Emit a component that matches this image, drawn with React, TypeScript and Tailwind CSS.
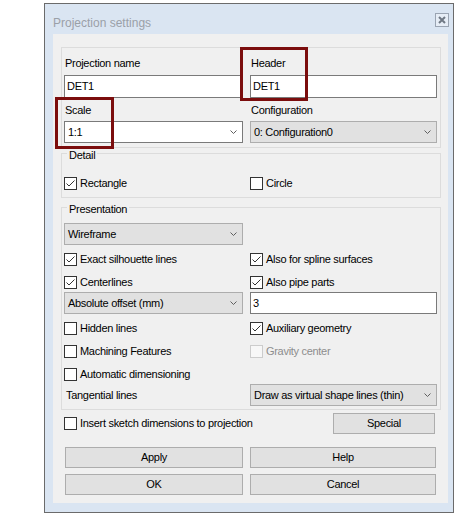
import React from 'react';

const Chevron = () => (
  <svg width="7" height="4" viewBox="0 0 7 4" className="shrink-0">
    <path d="M0.5 0.5 L3.5 3.5 L6.5 0.5" fill="none" stroke="#5f5f5f" strokeWidth="1" />
  </svg>
);

const Check: React.FC<{ checked?: boolean; disabled?: boolean }> = ({ checked, disabled }) => (
  <div
    className={`flex h-[13px] w-[13px] shrink-0 items-center justify-center border ${
      disabled ? 'border-[#cccccc] bg-[#f7f7f7]' : 'border-[#333333] bg-white'
    }`}
  >
    {checked && (
      <svg width="11" height="11" viewBox="0 0 11 11">
        <path d="M1.5 5.5 L4 8 L9.5 2.5" fill="none" stroke="#333333" strokeWidth="1" />
      </svg>
    )}
  </div>
);

const CheckRow: React.FC<{ label: string; checked?: boolean; disabled?: boolean }> = ({ label, checked, disabled }) => (
  <div className="flex h-[13px] items-center gap-[3px]">
    <Check checked={checked} disabled={disabled} />
    <span className={`leading-[13px] ${disabled ? 'text-[#8d8d8d]' : 'text-black'}`}>{label}</span>
  </div>
);

const Combo: React.FC<{ value: string; white?: boolean }> = ({ value, white }) => (
  <div
    className={`flex h-[22px] items-center justify-between border pl-[3px] pr-[5px] ${
      white ? 'border-[#7a7a7a] bg-white' : 'border-[#adadad] bg-[#e1e1e1]'
    }`}
  >
    <span className="leading-[13px]">{value}</span>
    <Chevron />
  </div>
);

const TextBox: React.FC<{ value: string; tall?: boolean }> = ({ value, tall }) => (
  <div className={`flex ${tall ? 'h-[23px]' : 'h-[22px]'} items-center border border-[#7a7a7a] bg-white pl-[2px]`}>
    <span className="leading-[13px]">{value}</span>
  </div>
);

const Button: React.FC<{ label: string; className?: string }> = ({ label, className }) => (
  <div className={`flex h-[21px] items-center justify-center border border-[#adadad] bg-[#e1e1e1] ${className ?? ''}`}>
    <span className="leading-[13px]">{label}</span>
  </div>
);

const Group: React.FC<{ title: string; className?: string; children: React.ReactNode }> = ({ title, className, children }) => (
  <div className={`relative w-[380px] border border-[#dcdcdc] ${className ?? ''}`}>
    <span className="absolute -top-[5px] left-[5px] bg-[#f0f0f0] px-[2px] leading-[13px]">{title}</span>
    {children}
  </div>
);

export default function App() {
  return (
    <div className="relative h-[516px] w-[456px] bg-white pl-[44px] pt-[3px] font-['Liberation_Sans',Arial,sans-serif] text-[11px] tracking-[-0.3px] text-black">
      <div className="flex h-[510px] w-[410px] flex-col border border-[#6b6b6b] bg-[#dae5f2]">
        <div className="flex h-[30px] items-start justify-between pl-[8px] pr-[4px]">
          <span className="pt-[12px] text-[12px] leading-[14px] tracking-normal text-[#9aa0a8]">Projection settings</span>
          <div className="mt-[9px] flex h-[14px] w-[14px] items-center justify-center border border-[#9aa4b2] bg-[#e6edf6]">
            <svg width="8" height="8" viewBox="0 0 8 8">
              <path d="M1 1 L7 7 M7 1 L1 7" stroke="#6f7884" strokeWidth="2" />
            </svg>
          </div>
        </div>

        <div className="ml-[8px] flex h-[469px] w-[395px] flex-col bg-[#f0f0f0] pl-[8px] pt-[13px]">
          {/* name / header / scale / configuration */}
          <div className="h-[101px] w-[380px] border border-[#dcdcdc] pl-[2px] pt-[9px]">
            <div className="grid grid-cols-[179px_187px] gap-x-[7px]">
              <span className="ml-[1px] leading-[13px]">Projection name</span>
              <span className="ml-[1px] leading-[13px]">Header</span>
              <div className="mt-[5px]"><TextBox value="DET1" tall /></div>
              <div className="mt-[5px]"><TextBox value="DET1" tall /></div>
              <span className="ml-[1px] mt-[6px] leading-[13px]">Scale</span>
              <span className="ml-[1px] mt-[6px] leading-[13px]">Configuration</span>
              <div className="mt-[4px]"><Combo value="1:1" white /></div>
              <div className="mt-[4px]"><Combo value="0: Configuration0" /></div>
            </div>
          </div>

          <Group title="Detail" className="mt-[5px] pb-[7px] pl-[2px] pt-[23px]">
            <div className="grid grid-cols-[179px_187px] gap-x-[7px]">
              <CheckRow label="Rectangle" checked />
              <CheckRow label="Circle" />
            </div>
          </Group>

          <Group title="Presentation" className="mt-[9px] pb-[3px] pl-[2px] pt-[15px]">
            <div className="grid grid-cols-[179px_187px] gap-x-[7px]">
              <Combo value="Wireframe" />
              <div />
              <div className="mt-[8px]"><CheckRow label="Exact silhouette lines" checked /></div>
              <div className="mt-[8px]"><CheckRow label="Also for spline surfaces" checked /></div>
              <div className="mt-[10px]"><CheckRow label="Centerlines" checked /></div>
              <div className="mt-[10px]"><CheckRow label="Also pipe parts" checked /></div>
              <div className="mt-[3px]"><Combo value="Absolute offset (mm)" /></div>
              <div className="mt-[3px]"><TextBox value="3" /></div>
              <div className="mt-[8px]"><CheckRow label="Hidden lines" /></div>
              <div className="mt-[8px]"><CheckRow label="Auxiliary geometry" checked /></div>
              <div className="mt-[10px]"><CheckRow label="Machining Features" /></div>
              <div className="mt-[10px]"><CheckRow label="Gravity center" disabled /></div>
              <div className="mt-[10px]"><CheckRow label="Automatic dimensioning" /></div>
              <div />
              <div className="mt-[3px] flex h-[22px] items-center pl-[2px]">
                <span className="leading-[13px]">Tangential lines</span>
              </div>
              <div className="mt-[3px]"><Combo value="Draw as virtual shape lines (thin)" /></div>
            </div>
          </Group>

          <div className="mt-[3px] flex w-[380px] items-center justify-between pl-[3px] pr-[6px]">
            <CheckRow label="Insert sketch dimensions to projection" />
            <Button label="Special" className="w-[102px]" />
          </div>

          <div className="mt-[13px] grid w-[380px] grid-cols-[178px_186px] gap-x-[7px] gap-y-[6px] pl-[4px]">
            <Button label="Apply" />
            <Button label="Help" />
            <Button label="OK" />
            <Button label="Cancel" />
          </div>
        </div>
      </div>

      {/* annotation boxes */}
      <div className="absolute left-[240px] top-[47px] h-[54px] w-[68px] border-[3px] border-[#7b0d0d]" />
      <div className="absolute left-[55px] top-[97px] h-[52px] w-[59px] border-[3px] border-[#7b0d0d]" />
    </div>
  );
}
